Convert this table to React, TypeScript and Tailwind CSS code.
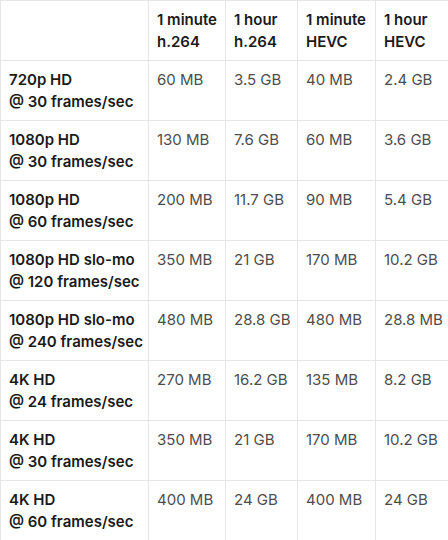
const HEADERS = [
  ["1 minute", "h.264"],
  ["1 hour", "h.264"],
  ["1 minute", "HEVC"],
  ["1 hour", "HEVC"],
]

const ROWS = [
  { mode: "720p HD", fps: "@ 30 frames/sec", sizes: ["60 MB", "3.5 GB", "40 MB", "2.4 GB"] },
  { mode: "1080p HD", fps: "@ 30 frames/sec", sizes: ["130 MB", "7.6 GB", "60 MB", "3.6 GB"] },
  { mode: "1080p HD", fps: "@ 60 frames/sec", sizes: ["200 MB", "11.7 GB", "90 MB", "5.4 GB"] },
  { mode: "1080p HD slo-mo", fps: "@ 120 frames/sec", sizes: ["350 MB", "21 GB", "170 MB", "10.2 GB"] },
  { mode: "1080p HD slo-mo", fps: "@ 240 frames/sec", sizes: ["480 MB", "28.8 GB", "480 MB", "28.8 MB"] },
  { mode: "4K HD", fps: "@ 24 frames/sec", sizes: ["270 MB", "16.2 GB", "135 MB", "8.2 GB"] },
  { mode: "4K HD", fps: "@ 30 frames/sec", sizes: ["350 MB", "21 GB", "170 MB", "10.2 GB"] },
  { mode: "4K HD", fps: "@ 60 frames/sec", sizes: ["400 MB", "24 GB", "400 MB", "24 GB"] },
]

export default function App() {
  return (
    <div className="w-[448px] h-[540px] overflow-hidden bg-white font-['Inter',sans-serif] text-[15px] leading-[22px]">
      <table className="w-[448px] table-fixed border-collapse border border-[#e6e6e6]">
        <colgroup>
          <col className="w-[148px]" />
          <col className="w-[77px]" />
          <col className="w-[72px]" />
          <col className="w-[78px]" />
          <col className="w-[73px]" />
        </colgroup>
        <thead>
          <tr>
            <th className="border border-[#e6e6e6] pt-2 pb-[7px] px-2" />
            {HEADERS.map(([a, b], i) => (
              <th
                key={i}
                className="border border-[#e6e6e6] px-2 pt-2 pb-[7px] text-left align-top font-semibold text-[#1a1a1a] whitespace-nowrap"
              >
                {a}
                <br />
                {b}
              </th>
            ))}
          </tr>
        </thead>
        <tbody>
          {ROWS.map((row, i) => (
            <tr key={i}>
              <td className="border border-[#e6e6e6] px-2 pt-2 pb-[7px] align-top font-semibold text-[#1a1a1a] whitespace-nowrap">
                {row.mode}
                <br />
                {row.fps}
              </td>
              {row.sizes.map((s, j) => (
                <td
                  key={j}
                  className="border border-[#e6e6e6] px-2 pt-2 pb-[7px] align-top text-[#4d4d4d] whitespace-nowrap"
                >
                  {s}
                </td>
              ))}
            </tr>
          ))}
        </tbody>
      </table>
    </div>
  )
}
